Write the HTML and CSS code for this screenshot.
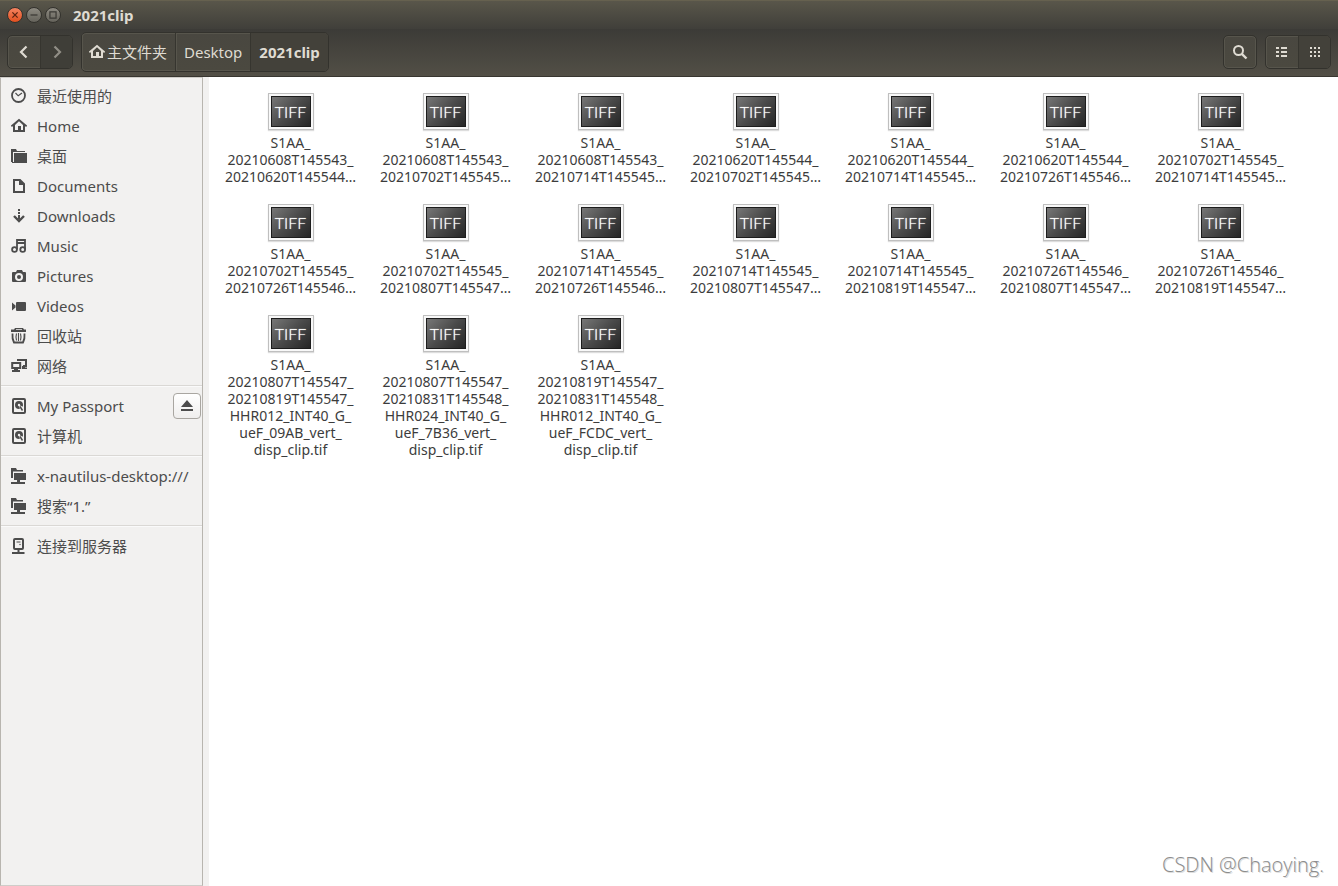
FILE: index.html
```html
<!DOCTYPE html>
<html lang="zh-CN">
<head>
<meta charset="utf-8">
<title>2021clip</title>
<link rel="stylesheet" href="styles.css">
</head>
<body>
<svg class="sprite" aria-hidden="true">
  <symbol id="house" viewBox="0 0 16 16"><path d="M8 .8 0 7.500V8.500h2V14h12V8.500h2v-1zM8 3.300 12 7v5H10V8H7v4H4V7z" fill-rule="evenodd"/></symbol>
  <symbol id="clock" viewBox="0 0 16 16"><circle cx="7.500" cy="7.500" r="6.500" fill="none" stroke="currentColor" stroke-width="1.800"/><path d="M4.500 5 7.200 7.800 11 5" fill="none" stroke="currentColor" stroke-width="1.200"/></symbol>
  <symbol id="folder" viewBox="0 0 16 16"><path d="M0 1h5l1 2h8v1H2v10H0zM3 5h13v10H1v-1h2z"/></symbol>
  <symbol id="doc" viewBox="0 0 16 16"><path d="M3 2h6l4 4v8H3z" fill="none" stroke="currentColor" stroke-width="2"/><path d="M8 1v6h6z"/></symbol>
  <symbol id="down" viewBox="0 0 16 16"><path d="M7 1h2v2H7zM7 4h2v2H7zM7 7h2v4H7z"/><path d="M3 8 8 13l5-5" fill="none" stroke="currentColor" stroke-width="2.400"/></symbol>
  <symbol id="music" viewBox="0 0 16 16"><path d="M6 11.500V2h8v9.500M6 5h8" fill="none" stroke="currentColor" stroke-width="1.800"/><circle cx="3.500" cy="11.500" r="2.400" fill="none" stroke="currentColor" stroke-width="1.800"/><circle cx="11.700" cy="11.500" r="2.400" fill="none" stroke="currentColor" stroke-width="1.800"/></symbol>
  <symbol id="camera" viewBox="0 0 16 16"><path fill-rule="evenodd" d="M2 4h3l1-2h5l1 2h2q1 0 1 1v8q0 1-1 1H2q-1 0-1-1V5q0-1 1-1zM8 5a4 4 0 1 0 0 8 4 4 0 0 0 0-8z"/><circle cx="8" cy="9" r="2"/></symbol>
  <symbol id="video" viewBox="0 0 16 16"><path d="M1 4.500l3.500 3v2l-3.500 3zM6 4h8q1 0 1 1v7q0 1-1 1H6q-1 0-1-1V5q0-1 1-1z"/></symbol>
  <symbol id="trash" viewBox="0 0 16 16"><path fill-rule="evenodd" d="M4 0h8l1 1.500h2V4H0V1.500h3zM5 1.200v.9h6v-.9z"/><path d="M1.500 5.500q-.5 5 1.500 9h9q2-4 1.500-9" fill="none" stroke="currentColor" stroke-width="1.800"/><path d="M5.500 5.500q-1 3.500 0 7M7.500 5v8M9.500 5.500q1 3.500 0 7" fill="none" stroke="currentColor" stroke-width="1.100"/></symbol>
  <symbol id="network" viewBox="0 0 16 16"><path d="M1.200 5h8v5h-8zM7 3V2h8v6h-3" fill="none" stroke="currentColor" stroke-width="2"/><path d="M3 11h4v1h2v2H1v-2h2zM11 8h3v1.500h2V11h-5z"/></symbol>
  <symbol id="disk" viewBox="0 0 16 16"><rect x="2" y="1" width="12" height="14" rx="1" fill="none" stroke="currentColor" stroke-width="2"/><circle cx="8" cy="7" r="4"/><circle cx="8" cy="7" r="1.200" fill="#f2f1f0"/><path d="M8 7l4.500 2v3.500L9 12z" fill="#f2f1f0"/><path d="M9 8.500l2.500 4" stroke="currentColor" stroke-width="1.500"/></symbol>
  <symbol id="remote" viewBox="0 0 16 16"><path d="M0 0h5l1 2h6v1.500H2V10H0zM3 5h12v7H9v2h5v2H0v-2h6v-2H3z"/></symbol>
  <symbol id="server" viewBox="0 0 16 16"><rect x="3" y="1" width="9" height="10" rx="1" fill="none" stroke="currentColor" stroke-width="2"/><path d="M6.500 12h2v2h5v2H1v-2h5.500z"/><path d="M5.500 4h4" stroke="currentColor"/><circle cx="9" cy="6.500" r=".7"/></symbol>
  <symbol id="eject" viewBox="0 0 14 14"><path d="M7 1l6 7H1zM1 10h12v2H1z"/></symbol>
  <symbol id="left" viewBox="0 0 16 16"><path d="M10.500 2.500 5 8l5.500 5.500" fill="none" stroke="currentColor" stroke-width="2.200"/></symbol>
  <symbol id="right" viewBox="0 0 16 16"><path d="M5.500 2.500 11 8l-5.500 5.500" fill="none" stroke="currentColor" stroke-width="2.200"/></symbol>
  <symbol id="search" viewBox="0 0 16 16"><circle cx="6.500" cy="6.500" r="4.500" fill="none" stroke="currentColor" stroke-width="2"/><path d="M9.800 9.800l4.700 4.700" stroke="currentColor" stroke-width="2.400"/></symbol>
  <symbol id="list" viewBox="0 0 16 16"><path d="M2 3h3v2H2zM7 3h6v2H7zM2 7h3v2H2zM7 7h6v2H7zM2 11h3v2H2zM7 11h6v2H7z"/></symbol>
  <symbol id="icons" viewBox="0 0 16 16"><path d="M3 3h2v2H3zM7 3h2v2H7zM11 3h2v2h-2zM3 7h2v2H3zM7 7h2v2H7zM11 7h2v2h-2zM3 11h2v2H3zM7 11h2v2H7zM11 11h2v2h-2z"/></symbol>
  <symbol id="x" viewBox="0 0 16 16"><path d="M5 5l6 6M11 5l-6 6" stroke="currentColor" stroke-width="1.500"/></symbol>
  <symbol id="minus" viewBox="0 0 16 16"><path d="M4 8h8" stroke="currentColor" stroke-width="1.400"/></symbol>
  <symbol id="square" viewBox="0 0 16 16"><path d="M4.500 4.500h7v7h-7z" fill="none" stroke="currentColor" stroke-width="1.400"/></symbol>
</svg>

<div class="window">
  <header class="header">
    <div class="titlebar">
      <button class="dot close" aria-label="关闭"><svg><use href="#x"/></svg></button>
      <button class="dot" aria-label="最小化"><svg><use href="#minus"/></svg></button>
      <button class="dot" aria-label="最大化"><svg><use href="#square"/></svg></button>
      <h1 class="title">2021clip</h1>
    </div>
    <div class="toolbar">
      <div class="group nav">
        <button class="tool" aria-label="后退"><svg class="icon"><use href="#left"/></svg></button>
        <button class="tool dim" aria-label="前进"><svg class="icon"><use href="#right"/></svg></button>
      </div>
      <nav class="group path">
        <button class="crumb first"><svg class="icon"><use href="#house"/></svg><span>主文件夹</span></button>
        <button class="crumb">Desktop</button>
        <button class="crumb current">2021clip</button>
      </nav>
      <div class="group find"><button class="tool" aria-label="搜索"><svg class="icon"><use href="#search"/></svg></button></div>
      <div class="group">
        <button class="tool" aria-label="列表视图"><svg class="icon"><use href="#list"/></svg></button>
        <button class="tool pressed" aria-label="图标视图"><svg class="icon"><use href="#icons"/></svg></button>
      </div>
    </div>
  </header>

  <div class="body">
    <aside class="sidebar">
      <ul class="places">
        <li><a href="#"><svg class="icon"><use href="#clock"/></svg>最近使用的</a></li>
        <li><a href="#"><svg class="icon"><use href="#house"/></svg>Home</a></li>
        <li><a href="#"><svg class="icon"><use href="#folder"/></svg>桌面</a></li>
        <li><a href="#"><svg class="icon"><use href="#doc"/></svg>Documents</a></li>
        <li><a href="#"><svg class="icon"><use href="#down"/></svg>Downloads</a></li>
        <li><a href="#"><svg class="icon"><use href="#music"/></svg>Music</a></li>
        <li><a href="#"><svg class="icon"><use href="#camera"/></svg>Pictures</a></li>
        <li><a href="#"><svg class="icon"><use href="#video"/></svg>Videos</a></li>
        <li><a href="#"><svg class="icon"><use href="#trash"/></svg>回收站</a></li>
        <li><a href="#"><svg class="icon"><use href="#network"/></svg>网络</a></li>
      </ul>
      <ul class="places">
        <li><a href="#"><svg class="icon"><use href="#disk"/></svg>My Passport</a><button class="eject" aria-label="弹出"><svg><use href="#eject"/></svg></button></li>
        <li><a href="#"><svg class="icon"><use href="#disk"/></svg>计算机</a></li>
      </ul>
      <ul class="places">
        <li><a href="#"><svg class="icon"><use href="#remote"/></svg>x-nautilus-desktop:///</a></li>
        <li><a href="#"><svg class="icon"><use href="#remote"/></svg>搜索“1.”</a></li>
      </ul>
      <ul class="places">
        <li><a href="#"><svg class="icon"><use href="#server"/></svg>连接到服务器</a></li>
      </ul>
    </aside>

    <main class="files">
      <figure class="file"><div class="thumb"><span>TIFF</span></div><figcaption>S1AA_<br>20210608T145543_<br>20210620T145544…</figcaption></figure>
      <figure class="file"><div class="thumb"><span>TIFF</span></div><figcaption>S1AA_<br>20210608T145543_<br>20210702T145545…</figcaption></figure>
      <figure class="file"><div class="thumb"><span>TIFF</span></div><figcaption>S1AA_<br>20210608T145543_<br>20210714T145545…</figcaption></figure>
      <figure class="file"><div class="thumb"><span>TIFF</span></div><figcaption>S1AA_<br>20210620T145544_<br>20210702T145545…</figcaption></figure>
      <figure class="file"><div class="thumb"><span>TIFF</span></div><figcaption>S1AA_<br>20210620T145544_<br>20210714T145545…</figcaption></figure>
      <figure class="file"><div class="thumb"><span>TIFF</span></div><figcaption>S1AA_<br>20210620T145544_<br>20210726T145546…</figcaption></figure>
      <figure class="file"><div class="thumb"><span>TIFF</span></div><figcaption>S1AA_<br>20210702T145545_<br>20210714T145545…</figcaption></figure>
      <figure class="file"><div class="thumb"><span>TIFF</span></div><figcaption>S1AA_<br>20210702T145545_<br>20210726T145546…</figcaption></figure>
      <figure class="file"><div class="thumb"><span>TIFF</span></div><figcaption>S1AA_<br>20210702T145545_<br>20210807T145547…</figcaption></figure>
      <figure class="file"><div class="thumb"><span>TIFF</span></div><figcaption>S1AA_<br>20210714T145545_<br>20210726T145546…</figcaption></figure>
      <figure class="file"><div class="thumb"><span>TIFF</span></div><figcaption>S1AA_<br>20210714T145545_<br>20210807T145547…</figcaption></figure>
      <figure class="file"><div class="thumb"><span>TIFF</span></div><figcaption>S1AA_<br>20210714T145545_<br>20210819T145547…</figcaption></figure>
      <figure class="file"><div class="thumb"><span>TIFF</span></div><figcaption>S1AA_<br>20210726T145546_<br>20210807T145547…</figcaption></figure>
      <figure class="file"><div class="thumb"><span>TIFF</span></div><figcaption>S1AA_<br>20210726T145546_<br>20210819T145547…</figcaption></figure>
      <figure class="file"><div class="thumb"><span>TIFF</span></div><figcaption>S1AA_<br>20210807T145547_<br>20210819T145547_<br>HHR012_INT40_G_<br>ueF_09AB_vert_<br>disp_clip.tif</figcaption></figure>
      <figure class="file"><div class="thumb"><span>TIFF</span></div><figcaption>S1AA_<br>20210807T145547_<br>20210831T145548_<br>HHR024_INT40_G_<br>ueF_7B36_vert_<br>disp_clip.tif</figcaption></figure>
      <figure class="file"><div class="thumb"><span>TIFF</span></div><figcaption>S1AA_<br>20210819T145547_<br>20210831T145548_<br>HHR012_INT40_G_<br>ueF_FCDC_vert_<br>disp_clip.tif</figcaption></figure>
    </main>
  </div>
  <p class="watermark">CSDN @Chaoying.</p>
</div>
</body>
</html>
```
FILE: styles.css
```css
* { box-sizing: border-box; }

body {
  margin: 0;
  font: 15px/20px "Noto Sans", "Noto Sans CJK SC", sans-serif;
  color: #4c4c4c;
  background: #fff;
}

button {
  margin: 0;
  padding: 0;
  border: 0;
  background: none;
  font: inherit;
  color: inherit;
}

.sprite { display: none; }
svg { fill: currentColor; display: block; }
.icon { width: 16px; height: 16px; flex: none; }

.window {
  position: relative;
  display: flex;
  flex-direction: column;
  min-height: 100vh;
}

/* Header */
.header { color: #dfdbd2; border-bottom: 1px solid #383630; }

.titlebar {
  display: flex;
  align-items: center;
  gap: 3px;
  height: 29px;
  padding-left: 7px;
  padding-bottom: 1px;
  border-top: 1px solid #66614f;
  background: linear-gradient(#59564a, #403f3a);
}

.dot {
  width: 16px;
  height: 16px;
  border: 1px solid #33322d;
  border-radius: 50%;
  background: linear-gradient(#8d8a81, #65635b);
  color: #3a3934;
}
.dot svg { width: 14px; height: 14px; }
.close { background: linear-gradient(#f58461, #e2501f); color: #5b2312; }

.title { margin: 0 0 0 9px; font-size: 15px; line-height: 20px; font-weight: 700; }

.toolbar {
  display: flex;
  align-items: center;
  gap: 8px;
  height: 47px;
  padding: 0 7px 2px;
  background: linear-gradient(#3c3b37, #524f46);
}

.group {
  display: flex;
  height: 34px;
  border: 1px solid #33322d;
  border-radius: 5px;
  overflow: hidden;
  background: linear-gradient(#494740, #4b4940);
  box-shadow: inset 0 0 0 1px #57554c;
}
.path { height: 40px; }
.find { margin-left: auto; }

.tool {
  display: flex;
  align-items: center;
  justify-content: center;
  width: 32px;
}
.tool + .tool { border-left: 1px solid #36352f; }
.dim { color: #918e86; background: #3f3e38; }
.pressed { background: #43413a; }

.crumb {
  display: flex;
  align-items: center;
  gap: 2px;
  padding: 0 8px;
  border-right: 1px solid #36352f;
  box-shadow: inset 1px 0 0 #57554c;
}
.first { padding-left: 7px; }
.current { border: 0; font-weight: 700; background: #43413a; box-shadow: none; }

/* Body */
.body { display: flex; flex: 1; background: #f2f1f0; }

.sidebar {
  flex: none;
  width: 203px;
  padding-top: 3px;
  border: 1px solid #b8b5af;
  border-top-color: #cfcdc9;
  border-bottom-color: #cfcdc9;
}

.places { list-style: none; margin: 0; padding: 0; }
.places + .places { margin-top: 4px; padding-top: 5px; border-top: 1px solid #dad8d5; box-shadow: inset 0 1px 0 #fafafa; }
.places li { display: flex; align-items: center; height: 30px; padding-right: 1px; }
.places a {
  display: flex;
  align-items: center;
  gap: 10px;
  flex: 1;
  padding-left: 10px;
  color: inherit;
  text-decoration: none;
  white-space: nowrap;
}

.eject {
  display: flex;
  align-items: center;
  justify-content: center;
  width: 28px;
  height: 26px;
  border: 1px solid #a9a6a1;
  border-radius: 4px;
  background: linear-gradient(#fff, #efeeed);
}
.eject svg { width: 14px; height: 14px; }

/* Files */
.files {
  flex: 1;
  display: grid;
  grid-template-columns: repeat(auto-fill, 155px);
  align-content: start;
  row-gap: 19px;
  margin-left: 6px;
  padding: 16px 4px;
  background: #fff;
}

.file {
  display: flex;
  flex-direction: column;
  align-items: center;
  gap: 4px;
  margin: 0;
  color: #3c3c3c;
  font-size: 14px;
  line-height: 17px;
  text-align: center;
}

.thumb {
  width: 46px;
  height: 37px;
  padding: 2px;
  border: 1px solid #bfbfbf;
  background: #f8f8f8;
  box-shadow: 0 1px 1px #ddd;
}
.thumb span {
  display: block;
  height: 31px;
  border: 1px solid #1d1d1d;
  background: linear-gradient(135deg, #777, #4a4a4a 50%, #262626);
  color: #fff;
  font: 300 16px/30px Lato, sans-serif;
  text-shadow: 0 0 1px #fff;
}

.watermark {
  position: absolute;
  right: 14px;
  bottom: 8px;
  margin: 0;
  font: 300 20px/26px "Open Sans", sans-serif;
  color: #8c8c8c;
  text-shadow: 1px 1px 0 #ddd;
}
```
